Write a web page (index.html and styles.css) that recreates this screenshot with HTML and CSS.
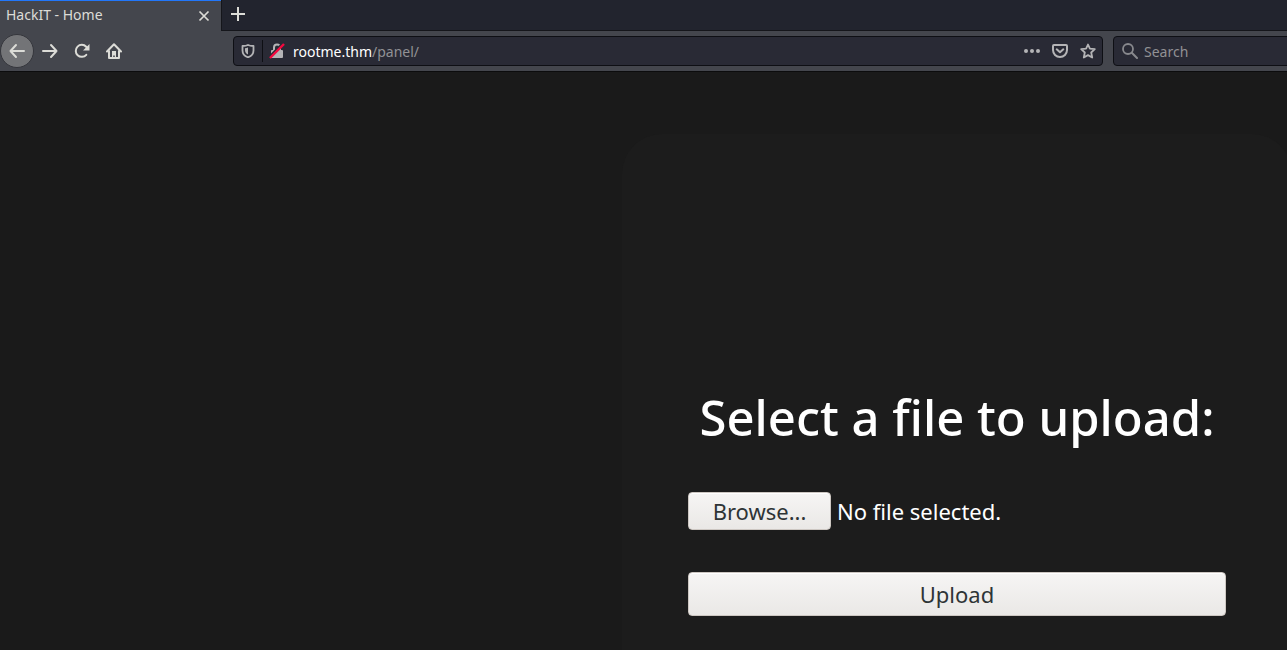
FILE: index.html
```html
<!DOCTYPE html>
<html lang="en">
<head>
<meta charset="utf-8">
<meta name="viewport" content="width=device-width, initial-scale=1">
<title>HackIT - Home</title>
<link rel="stylesheet" href="styles.css">
</head>
<body>
<header class="browser">
  <div class="tabs">
    <div class="tab">
      <span class="tab-title">HackIT - Home</span>
      <button class="tab-close" type="button" aria-label="Close tab"><svg width="12" height="12" viewBox="0 0 12 12"><path d="M1.5 1.5l9 9M10.500 1.500l-9 9" stroke-width="1.7"/></svg></button>
    </div>
    <button class="tab-new" type="button" aria-label="New tab"><svg width="14" height="14" viewBox="0 0 14 14"><path d="M7 0v14M0 7h14" stroke-width="2"/></svg></button>
  </div>
  <nav class="toolbar" aria-label="Browser">
    <div class="nav-buttons">
      <button class="nav-button back" type="button" aria-label="Back"><svg width="16" height="16" viewBox="0 0 16 16"><path d="M15 8H1.500M7 2L1.500 8L7 14" stroke-width="2" stroke-linecap="round" stroke-linejoin="round"/></svg></button>
      <button class="nav-button" type="button" aria-label="Forward"><svg width="16" height="16" viewBox="0 0 16 16"><path d="M1 8h13.500M9 2l5.500 6L9 14" stroke-width="2" stroke-linecap="round" stroke-linejoin="round"/></svg></button>
      <button class="nav-button" type="button" aria-label="Reload"><svg width="16" height="16" viewBox="0 0 16 16"><path d="M12.300 11.800A6 6 0 1 1 12.200 3.800L14 5.800" stroke-width="2" stroke-linecap="round"/><path class="solid" d="M15.500 1v6.500H9z"/></svg></button>
      <button class="nav-button" type="button" aria-label="Home"><svg width="16" height="16" viewBox="0 0 16 16"><path d="M1 8.500L8 1.300l7 7.200M3 7.500V15h10V7.500" stroke-width="2" stroke-linecap="round" stroke-linejoin="round"/><path class="solid" d="M6 8h4v7H8.800v-2.500H7.200V15H6z"/></svg></button>
    </div>
    <div class="field address">
      <svg class="shield" width="14" height="14" viewBox="0 0 14 14"><path d="M7 1C5.500 1.800 3.500 2 1.500 2v4.500C1.500 10 4 12.300 7 13.300c3-1 5.500-3.300 5.500-6.800V2C10.500 2 8.500 1.800 7 1z" stroke-width="1.800" stroke-linejoin="round"/><path class="solid" d="M7 3.500v7C5 9.500 4 8 4 6V4.200C5 4.100 6 3.900 7 3.500z"/></svg>
      <svg class="lock" width="16" height="16" viewBox="0 0 16 16"><path d="M5 8V4.500a3 3 0 0 1 6 0V8" stroke-width="2"/><rect class="solid" x="2" y="7" width="12" height="8" rx="1"/><path d="M0 14L13 1" stroke="#292a35" stroke-width="2"/><path d="M1 15L15 1" stroke="#f5093f" stroke-width="2.400"/></svg>
      <span class="url"><strong>rootme.thm</strong>/panel/</span>
      <div class="actions">
        <button class="action" type="button" aria-label="Page actions"><svg width="16" height="16" viewBox="0 0 16 16"><g class="solid"><circle cx="2" cy="8" r="2"/><circle cx="8" cy="8" r="2"/><circle cx="14" cy="8" r="2"/></g></svg></button>
        <button class="action" type="button" aria-label="Save to Pocket"><svg width="16" height="16" viewBox="0 0 16 16"><path d="M2 2h12q1 0 1 1v4A7 7 0 0 1 1 7V3q0-1 1-1z" stroke-width="2"/><path d="M4.700 6.300L8 9.300l3.300-3" stroke-width="2" stroke-linecap="round" stroke-linejoin="round"/></svg></button>
        <button class="action" type="button" aria-label="Bookmark"><svg width="16" height="16" viewBox="0 0 16 16"><path d="M8 1.500l1.900 4.200 4.900.5-3.600 3.300 1 5L8 12.100l-4.200 2.400 1-5L1.200 6.200l4.900-.5z" stroke-width="1.800" stroke-linejoin="round"/></svg></button>
      </div>
    </div>
    <div class="field search">
      <svg width="16" height="16" viewBox="0 0 16 16"><circle cx="6" cy="6" r="5" stroke-width="1.800"/><path d="M9.800 9.800L15 15" stroke-width="2" stroke-linecap="round"/></svg>
      <input class="search-input" type="search" placeholder="Search" aria-label="Search">
    </div>
  </nav>
</header>
<main class="page">
  <form class="panel">
    <h1 class="title">Select a file to upload:</h1>
    <div class="file-row">
      <input class="file-input" id="file" type="file">
      <label class="button browse" for="file">Browse...</label>
      <span class="file-name">No file selected.</span>
    </div>
    <button class="button upload" type="button">Upload</button>
  </form>
</main>
</body>
</html>
```
FILE: styles.css
```css
* { box-sizing: border-box; }

body {
  display: flex;
  flex-direction: column;
  min-height: 100vh;
  margin: 0;
  overflow: hidden;
  background: #1a1a1a;
  color: #fff;
  font-family: "Noto Sans", sans-serif;
}

button {
  padding: 0;
  border: 0;
  background: none;
  color: inherit;
  font: inherit;
}

svg {
  display: block;
  flex: none;
  fill: none;
  stroke: currentColor;
}

.solid {
  fill: currentColor;
  stroke: none;
}

.browser {
  background: #44464d;
  color: #dcdcd7;
  font-size: 14px;
  line-height: 20px;
}

.tabs {
  display: flex;
  height: 31px;
  background: #22242e;
}

.tab {
  display: flex;
  align-items: center;
  justify-content: space-between;
  width: 221px;
  padding: 0 11px 1px 6px;
  border-top: 1px solid #2277fa;
  background: #44464d;
}

.tab-title { padding-bottom: 2px; }

.tab-new {
  display: grid;
  place-items: center;
  width: 34px;
  padding: 0 2px 3px 0;
  border-left: 1px solid #15161b;
}

.tabs::after {
  content: "";
  flex: 1;
}

.tab-new,
.tabs::after {
  border-bottom: 1px solid #15161b;
}

.toolbar {
  display: flex;
  align-items: center;
  height: 41px;
  overflow: hidden;
  border-bottom: 1px solid #0c0c0d;
}

.nav-buttons {
  display: flex;
  width: 233px;
  flex: none;
}

.nav-button {
  display: grid;
  place-items: center;
  width: 32px;
  height: 32px;
}

.back {
  width: 34px;
  height: 34px;
  border: 1px solid #35363c;
  border-radius: 50%;
  background: #737477;
}

.nav-buttons { align-items: center; }

.field {
  display: flex;
  align-items: center;
  height: 30px;
  border: 1px solid #0e0f14;
  border-radius: 4px;
  background: #292a35;
  color: #b4b4b6;
}

.address {
  flex: 1;
  padding: 0 6px 0 7px;
}

.shield { margin-right: 7px; }

.lock {
  width: 23px;
  height: 22px;
  padding: 3px 0 3px 6px;
  border-left: 1px solid #0e0f14;
}

.url {
  flex: 1;
  margin-left: 8px;
  padding-top: 2px;
  color: #919194;
}

.url strong {
  color: #fff;
  font-weight: 400;
}

.actions {
  display: flex;
  gap: 12px;
}

.search {
  width: 184px;
  flex: none;
  gap: 6px;
  margin: 0 -10px 0 10px;
  padding-left: 8px;
  color: #88898d;
}

.search-input {
  min-width: 0;
  flex: 1;
  padding: 2px 0 0;
  border: 0;
  outline: 0;
  background: none;
  color: inherit;
  font: inherit;
}

.search-input::placeholder { color: #919194; }

.page {
  display: flex;
  flex: 1;
  justify-content: flex-end;
  padding-top: 62px;
}

.panel {
  width: 670px;
  flex: none;
  margin-right: -5px;
  padding: 245px 66px 34px;
  border-radius: 40px 40px 0 0;
  background: #1c1c1c;
}

.title {
  margin: 0 0 37px;
  font-size: 49px;
  font-weight: 500;
  line-height: 76px;
  text-align: center;
  white-space: nowrap;
}

.file-row {
  display: flex;
  align-items: center;
  gap: 6px;
  margin-bottom: 42px;
  font-size: 22px;
}

.file-input {
  width: 1px;
  height: 1px;
  margin: 0 -7px 0 0;
  opacity: 0;
}

.button {
  display: grid;
  place-items: center;
  border: 1px solid #cdc7c2;
  border-radius: 4px;
  background: linear-gradient(#f6f5f4, #eae8e6);
  box-shadow: inset 0 1px #fff;
  color: #2e3436;
  font-size: 22px;
  line-height: 30px;
}

.browse {
  width: 143px;
  height: 38px;
}

.upload {
  width: 100%;
  height: 44px;
}
```
